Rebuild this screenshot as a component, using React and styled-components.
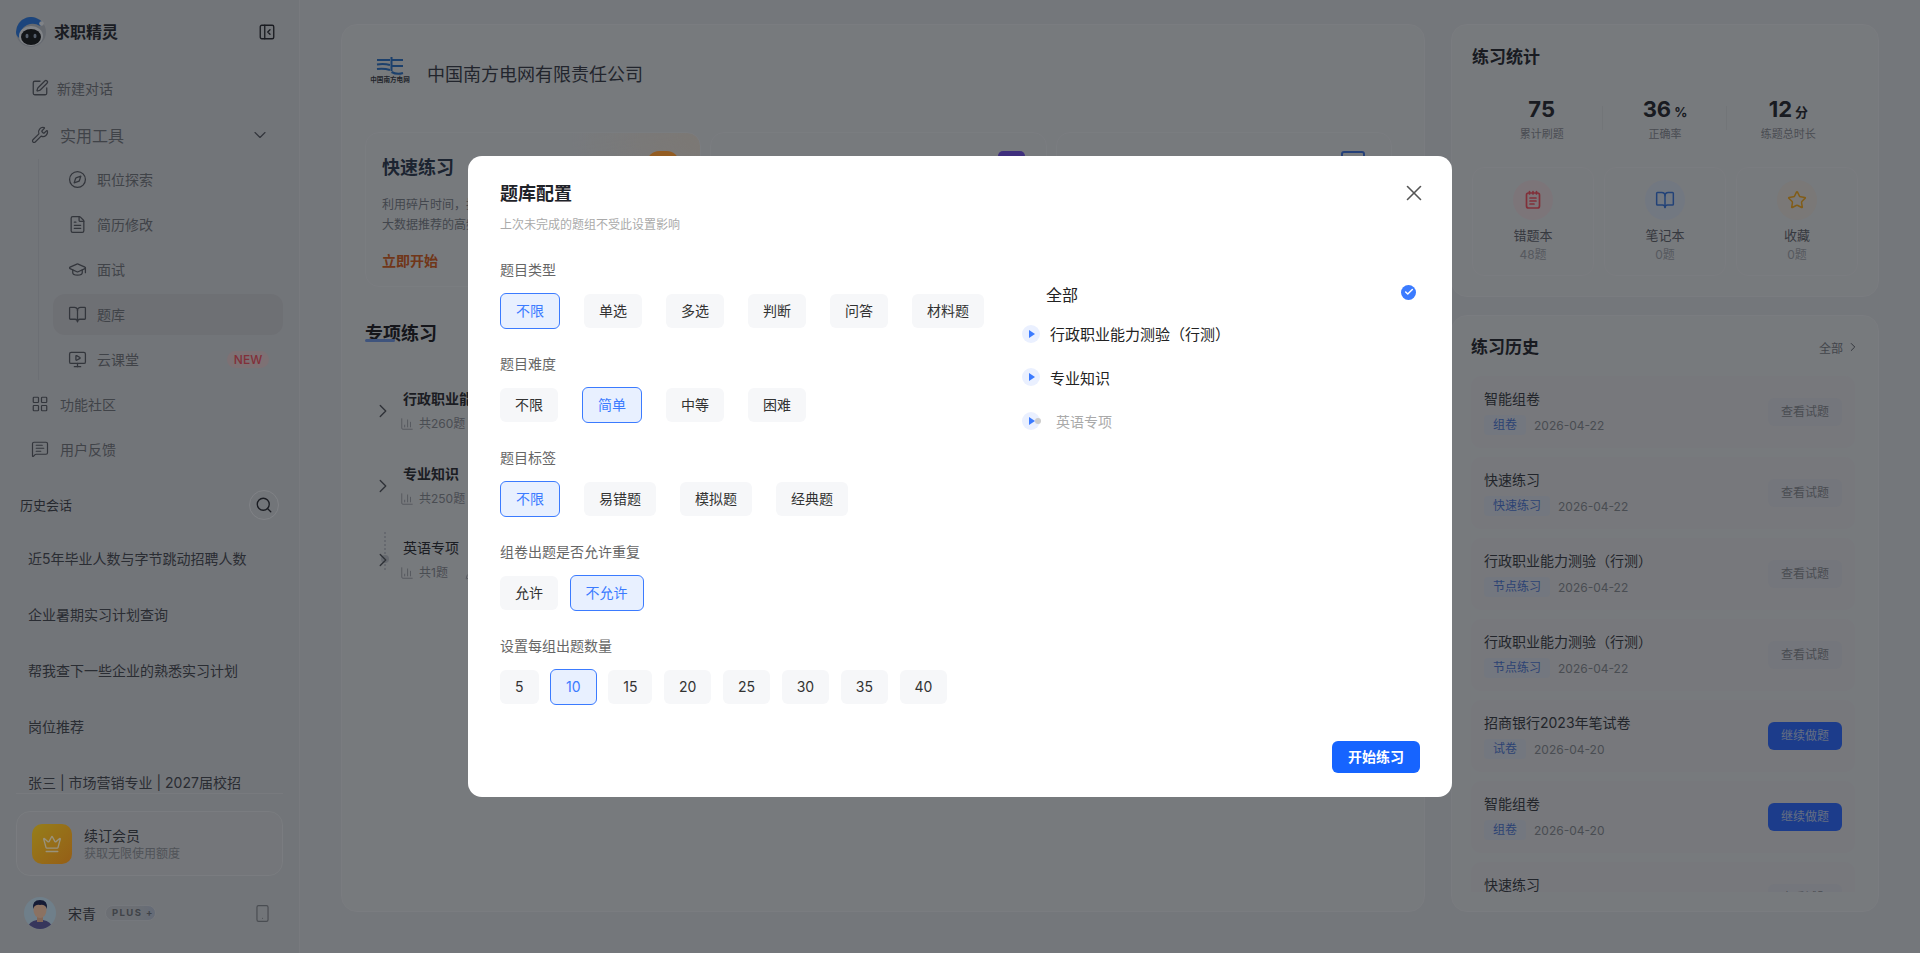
import React from 'react';
import styled, {createGlobalStyle} from 'styled-components';
import {
  BookOpen, ChartColumn, Check, ChevronDown, ChevronRight, Compass, Crown, FileText, GraduationCap,
  LayoutGrid, MessageSquareText, MonitorPlay, PanelLeftClose, PenLine, Search, Smartphone, SquarePen,
  Star, Wrench, X,
} from 'lucide-react';

const GlobalStyle = createGlobalStyle`
  html, body {
    margin: 0;
    height: 100%;
    overflow: hidden;
    font-family: Inter, "Noto Sans CJK SC", sans-serif;
    color: #3a3f4b;
  }
  * { box-sizing: border-box; }
`;

const Page = styled.div`
  display: flex;
  height: 100vh;
  background: #c2c6cd;
`;

/* ---------- sidebar ---------- */
const Sidebar = styled.aside`
  width: 300px;
  flex-shrink: 0;
  display: flex;
  flex-direction: column;
  padding: 17px 16px 24px;
  background: #bfc3ca;
  border-right: 1px solid #c8ccd3;
`;
const Brand = styled.div`
  display: flex;
  align-items: center;
  height: 30px;
  padding-right: 7px;
  color: #2c3039;
`;
const BrandName = styled.div`
  margin: -2px 0 0 8px;
  flex: 1;
  font-size: 16px;
  font-weight: 700;
`;
const NavList = styled.nav`
  margin-top: 20.5px;
  display: flex;
  flex-direction: column;
  gap: 4px;
`;
const NavRow = styled.div`
  height: 41px;
  display: flex;
  align-items: center;
  padding: 0 15px;
  gap: ${p => p.$gap || 13}px;
  margin-top: ${p => p.$mt || 0}px;
  font-size: ${p => p.$fs || 14}px;
  color: #6b7079;
  border-radius: 12px;
  background: ${p => (p.$active ? '#b8bbc2' : 'transparent')};
  svg { flex-shrink: 0; color: #555a64; }
`;
const SubNav = styled.div`
  margin: -1px 0 0 22px;
  padding-left: 14px;
  border-left: 1px solid #b4b9c1;
  display: flex;
  flex-direction: column;
  gap: 4px;
`;
const NewBadge = styled.span`
  margin-left: auto;
  margin-right: -1px;
  width: 42px;
  height: 17px;
  border-radius: 9px;
  background: #d0bcc2;
  color: #d85060;
  font-size: 12px;
  font-weight: 500;
  line-height: 17px;
  text-align: center;
`;
const HistoryHead = styled.div`
  margin-top: 20px;
  height: 30px;
  padding: 0 4px;
  display: flex;
  align-items: center;
  justify-content: space-between;
  font-size: 13px;
  color: #3f434d;
`;
const SearchBtn = styled.div`
  width: 30px;
  height: 30px;
  border-radius: 50%;
  border: 1px solid #d5d9df;
  display: flex;
  align-items: center;
  justify-content: center;
  color: #2c3039;
`;
const HistoryList = styled.div`
  flex: 1;
  min-height: 0;
  margin-top: 10px;
  overflow: hidden;
  border-bottom: 1px solid #c8ccd3;
`;
const HistoryItem = styled.div`
  height: 56.2px;
  padding-left: 12px;
  display: flex;
  align-items: center;
  font-size: 14px;
  color: #474b55;
  white-space: nowrap;
`;
const MemberCard = styled.div`
  margin-top: 17px;
  height: 65px;
  padding: 0 15px;
  display: flex;
  align-items: center;
  gap: 12px;
  background: #c1c5cb;
  border: 1px solid #cbcfd5;
  border-radius: 14px;
`;
const CrownBox = styled.div`
  width: 40px;
  height: 40px;
  border-radius: 10px;
  background: linear-gradient(135deg, #fbd32c, #f99d26);
  color: #fff3cf;
  display: flex;
  align-items: center;
  justify-content: center;
`;
const MemberTitle = styled.div`
  font-size: 14px;
  line-height: 19px;
  color: #3f434d;
`;
const MemberSub = styled.div`
  font-size: 12px;
  line-height: 17px;
  color: #868b94;
`;
const UserRow = styled.div`
  margin-top: 21px;
  height: 32px;
  padding: 0 11px 0 8px;
  display: flex;
  align-items: center;
  font-size: 14px;
  color: #3f434d;
`;
const UserName = styled.span`
  margin-left: 12px;
`;
const PlusBadge = styled.span`
  margin-left: 9px;
  width: 51px;
  height: 16px;
  border-radius: 8px;
  border: 1px solid #c4c9d0;
  background: linear-gradient(90deg, #b4b9c1 60%, #a8b3c7);
  color: #6b7079;
  font-size: 9.5px;
  font-weight: 700;
  letter-spacing: 1.4px;
  line-height: 14px;
  padding-left: 6px;
  white-space: nowrap;
`;
const PhoneIcon = styled.span`
  margin-left: auto;
  display: flex;
  color: #7b8089;
`;

/* ---------- main column ---------- */
const Content = styled.main`
  flex: 1;
  min-width: 0;
  display: flex;
  gap: 26px;
  padding: 24px 41px 41px;
`;
const Card = styled.section`
  background: #c7cbd1;
  border: 1px solid #cbcfd5;
  border-radius: 16px;
`;
const MainCard = styled(Card)`
  flex: 1;
  min-width: 0;
  padding: 30px 32px 0 24px;
`;
const CompanyRow = styled.div`
  height: 36px;
  display: flex;
  align-items: center;
  gap: 17px;
  padding-left: 4px;
  font-size: 18px;
  color: #3a3f4b;
`;
const CompanyLogo = styled.div`
  width: 40px;
  display: flex;
  flex-direction: column;
  align-items: center;
  margin-top: -4px;
  svg { display: block; }
  span {
    font-size: 6.6px;
    line-height: 9px;
    font-weight: 700;
    color: #3a3f4b;
    white-space: nowrap;
  }
`;
const PracticeGrid = styled.div`
  margin: 41px 0 0 -1px;
  display: grid;
  grid-template-columns: repeat(3, 1fr);
  gap: 9px;
`;
const PracticeCard = styled.div`
  position: relative;
  height: 155px;
  padding: 23px 16px;
  border: 1px solid #ccd0d6;
  border-radius: 14px;
  overflow: hidden;
  background: ${p => p.$glow || 'transparent'};
`;
const PracticeTitle = styled.div`
  font-size: 18px;
  line-height: 24px;
  font-weight: 700;
  color: #2f3c52;
`;
const PracticeDesc = styled.div`
  margin-top: 15px;
  font-size: 12px;
  line-height: 20px;
  color: #6f7580;
  white-space: nowrap;
`;
const PracticeLink = styled.div`
  margin-top: 16px;
  font-size: 14px;
  line-height: 20px;
  font-weight: 700;
  color: #bb5a2a;
`;
const CornerIcon = styled.div`
  position: absolute;
  top: 18px;
  right: ${p => p.$right}px;
  width: ${p => p.$size}px;
  height: 32px;
  border-radius: ${p => p.$radius}px;
  background: ${p => p.$bg};
  border: ${p => p.$border || 'none'};
`;
const SectionTitle = styled.h2`
  position: relative;
  width: max-content;
  margin: 35px 0 0 -1px;
  font-size: 18px;
  line-height: 24px;
  font-weight: 700;
  color: #23262d;
  &::after {
    content: '';
    position: absolute;
    left: 0;
    bottom: 4px;
    width: 30px;
    height: 3px;
    border-radius: 2px;
    background: #6a8cd0;
  }
`;
const TreeList = styled.div`
  margin-top: 43px;
  display: flex;
  flex-direction: column;
  gap: 30.5px;
`;
const TreeRow = styled.div`
  position: relative;
  padding-left: 37px;
  height: 44px;
`;
const TreeChevron = styled.span`
  position: absolute;
  left: 6px;
  top: 11px;
  display: flex;
  color: #4f545e;
`;
const TreeConnector = styled.span`
  position: absolute;
  left: 18px;
  top: -6px;
  height: 38px;
  border-left: 2px dotted #aab0b9;
`;
const TreeDot = styled.span`
  position: absolute;
  left: 15px;
  top: 17px;
  width: 8px;
  height: 8px;
  border-radius: 50%;
  background: #aab0b9;
`;
const TreeTitle = styled.div`
  font-size: 14px;
  line-height: 20px;
  font-weight: ${p => (p.$plain ? 400 : 700)};
  color: #2e3139;
  white-space: nowrap;
`;
const TreeMeta = styled.div`
  margin: 6px 0 0 -3px;
  display: flex;
  align-items: center;
  gap: 5px;
  font-size: 12px;
  line-height: 18px;
  color: #7b8089;
  svg { color: #868b94; }
  span + svg { margin-left: 12px; }
`;

/* ---------- right column ---------- */
const SideColumn = styled.div`
  width: 428px;
  flex-shrink: 0;
  display: flex;
  flex-direction: column;
  gap: 18px;
`;
const StatsCard = styled(Card)`
  height: 273px;
  padding: 20px 20px 0;
`;
const HistoryCard = styled(Card)`
  flex: 1;
  min-height: 0;
  padding: 19px 23px 19px 19px;
  display: flex;
  flex-direction: column;
`;
const CardTitle = styled.div`
  font-size: 17px;
  line-height: 24px;
  font-weight: 700;
  color: #2a2e37;
`;
const StatRow = styled.div`
  margin: 25px 8px 0;
  display: grid;
  grid-template-columns: repeat(3, 1fr);
`;
const Stat = styled.div`
  position: relative;
  text-align: center;
  &:not(:last-child)::after {
    content: '';
    position: absolute;
    right: 0;
    top: 12px;
    height: 24px;
    border-right: 1px solid #bfc3c9;
  }
`;
const StatValue = styled.div`
  font-size: 22px;
  line-height: 30px;
  font-weight: 700;
  color: #2a2e37;
  small {
    margin-left: 3px;
    font-size: 13px;
    line-height: 1;
    font-weight: 700;
  }
`;
const StatLabel = styled.div`
  margin-top: 2px;
  font-size: 11px;
  line-height: 16px;
  color: #7b8089;
`;
const TileRow = styled.div`
  margin-top: 25px;
  display: grid;
  grid-template-columns: repeat(3, 1fr);
  gap: 10px;
`;
const Tile = styled.div`
  height: 109px;
  padding-top: 12px;
  display: flex;
  flex-direction: column;
  align-items: center;
  border: 1px solid #cccfd5;
  border-radius: 12px;
`;
const TileIcon = styled.div`
  width: 40px;
  height: 40px;
  border-radius: 50%;
  background: ${p => p.$bg};
  color: ${p => p.$color};
  display: flex;
  align-items: center;
  justify-content: center;
`;
const TileName = styled.div`
  margin-top: 6px;
  font-size: 13px;
  line-height: 18px;
  color: #5b606a;
`;
const TileCount = styled.div`
  margin-top: 2px;
  font-size: 12px;
  line-height: 18px;
  color: #90959e;
`;
const HistoryTop = styled.div`
  display: flex;
  align-items: center;
  justify-content: space-between;
  margin-right: -5px;
`;
const AllLink = styled.div`
  display: flex;
  align-items: center;
  gap: 3px;
  font-size: 12px;
  color: #6f747d;
  svg { color: #4f545e; }
`;
const RecordList = styled.div`
  margin-top: 17px;
  flex: 1;
  min-height: 0;
  overflow: hidden;
  display: flex;
  flex-direction: column;
  gap: 9px;
`;
const Record = styled.div`
  flex-shrink: 0;
  height: 72px;
  padding: 0 13px;
  display: flex;
  align-items: center;
  justify-content: space-between;
  border-radius: 10px;
  background: #c6c9cf;
`;
const RecordTitle = styled.div`
  font-size: 14px;
  line-height: 20px;
  color: #3a3e48;
  white-space: nowrap;
`;
const RecordMeta = styled.div`
  margin-top: 6px;
  display: flex;
  align-items: center;
  gap: 8px;
  font-size: 12px;
  color: #7b8089;
`;
const RecordTag = styled.span`
  height: 20px;
  padding: 0 9px;
  border-radius: 4px;
  background: #c0c6d4;
  color: #4a6fc0;
  line-height: 20px;
`;
const RecordBtn = styled.div`
  width: 74px;
  height: 28px;
  border-radius: 6px;
  font-size: 12px;
  line-height: 28px;
  text-align: center;
  background: ${p => (p.$primary ? '#3064e8' : '#c2c5cf')};
  color: ${p => (p.$primary ? '#a8b8d8' : '#7b8089')};
`;

/* ---------- dialog ---------- */
const Overlay = styled.div`
  position: fixed;
  inset: 0;
  display: flex;
  align-items: center;
  justify-content: center;
  background: rgba(0, 0, 0, 0.4);
`;
const Dialog = styled.div`
  position: relative;
  width: 984px;
  padding: 25px 32px 24px 32px;
  background: #fff;
  border-radius: 14px;
  color: #333;
`;
const CloseBtn = styled.span`
  position: absolute;
  top: 24px;
  right: 25px;
  display: flex;
  color: #555;
`;
const DialogTitle = styled.div`
  font-size: 18px;
  line-height: 26px;
  font-weight: 700;
  color: #1f2329;
`;
const DialogSub = styled.div`
  margin-top: 9px;
  font-size: 12px;
  line-height: 18px;
  color: #aaa;
`;
const DialogBody = styled.div`
  margin-top: 26px;
  display: flex;
`;
const OptionColumn = styled.div`
  width: 522px;
  flex-shrink: 0;
  display: flex;
  flex-direction: column;
  gap: 25px;
`;
const OptionLabel = styled.div`
  font-size: 14px;
  line-height: 20px;
  color: #666;
`;
const ChipRow = styled.div`
  margin-top: 13px;
  height: 36px;
  display: flex;
  align-items: center;
  gap: ${p => p.$gap}px;
`;
const Chip = styled.div`
  padding: 0 15px;
  height: ${p => (p.$active ? 36 : 34)}px;
  line-height: 34px;
  font-size: 14px;
  white-space: nowrap;
  border-radius: 6px;
  background: ${p => (p.$active ? '#e8f0ff' : '#f6f7f9')};
  border: ${p => (p.$active ? '1px solid #3b7bff' : 'none')};
  color: ${p => (p.$active ? '#3b7bff' : '#333')};
`;
const SubjectTree = styled.div`
  flex: 1;
  padding: 14.5px 4px 0 0;
`;
const AllRow = styled.div`
  height: 39px;
  padding-left: 24px;
  display: flex;
  align-items: center;
  justify-content: space-between;
  font-size: 16px;
  color: #222;
`;
const CheckMark = styled.span`
  width: 15px;
  height: 15px;
  margin-bottom: 4px;
  border-radius: 50%;
  background: #3b7bff;
  color: #fff;
  display: flex;
  align-items: center;
  justify-content: center;
`;
const SubjectRow = styled.div`
  height: 40px;
  margin-bottom: 3.6px;
  display: flex;
  align-items: center;
  gap: ${p => (p.$muted ? 16 : 10)}px;
  font-size: ${p => (p.$muted ? 14 : 15)}px;
  color: ${p => (p.$muted ? '#aaa' : '#222')};
`;
const Expander = styled.span`
  position: relative;
  width: 18px;
  height: 18px;
  border-radius: 50%;
  background: #eaf0ff;
  flex-shrink: 0;
  &::before {
    content: '';
    position: absolute;
    left: 6.5px;
    top: 5px;
    border-left: 6px solid #3b7bff;
    border-top: 4px solid transparent;
    border-bottom: 4px solid transparent;
  }
  ${p => p.$dot && `
    &::after {
      content: '';
      position: absolute;
      right: -1px;
      top: 6px;
      width: 6px;
      height: 6px;
      border-radius: 50%;
      background: #ccc;
    }
  `}
`;
const DialogFooter = styled.div`
  margin-top: 36px;
  display: flex;
  justify-content: flex-end;
`;
const StartBtn = styled.div`
  width: 88px;
  height: 32px;
  border-radius: 6px;
  background: #1664ff;
  color: #fff;
  font-size: 14px;
  font-weight: 600;
  line-height: 32px;
  text-align: center;
`;

/* ---------- drawings ---------- */
const RobotLogo = () => (
  <svg width="30" height="30" viewBox="0 0 30 30">
    <circle cx="15" cy="15" r="15" fill="#a9b0ba"/>
    <path d="M0 15A15 15 0 0 1 27 6L24 9Q18 5 11 8Q4 11 3.5 21Q0 19 0 15Z" fill="#2f74d0"/>
    <circle cx="25.5" cy="6.5" r="2.3" fill="#d6dbe2"/>
    <ellipse cx="15" cy="19" rx="12" ry="10" fill="#d6dbe2"/>
    <ellipse cx="15" cy="20" rx="10" ry="8" fill="#1f2329"/>
    <ellipse cx="11" cy="19" rx="1.5" ry="2.2" fill="#8a9bb0"/>
    <ellipse cx="19" cy="19" rx="1.5" ry="2.2" fill="#8a9bb0"/>
  </svg>
);

const GridLogo = () => (
  <svg width="28" height="19" viewBox="0 0 28 19" fill="none" stroke="#2f6cb4" strokeWidth="2">
    <path d="M1 3H14"/>
    <path d="M1 7.5Q8 6.5 14 8"/>
    <path d="M1 12Q8 11 14 13"/>
    <path d="M15.5 0V14"/>
    <path d="M15.5 3H27"/>
    <path d="M15.5 9H27"/>
    <path d="M15.5 15Q21 18 27 16"/>
  </svg>
);

const Avatar = () => (
  <svg width="32" height="32" viewBox="0 0 32 32">
    <clipPath id="avatarClip"><circle cx="16" cy="16" r="16"/></clipPath>
    <g clipPath="url(#avatarClip)">
      <rect width="32" height="32" fill="#b9d4e6"/>
      <path d="M3 32Q5 24 13 23H19Q27 24 29 32Z" fill="#5d5a9a"/>
      <rect x="13" y="18" width="6" height="7" fill="#d8ab92"/>
      <ellipse cx="16" cy="13" rx="6.5" ry="8" fill="#e8bea4"/>
      <path d="M9 12Q8 3 16 3Q24 3 23 12Q21 7 16 8Q11 7 9 12Z" fill="#24305a"/>
    </g>
  </svg>
);

const NoteIcon = () => (
  <svg width="20" height="20" viewBox="0 0 20 20" fill="none" stroke="currentColor" strokeWidth="1.7" strokeLinecap="round">
    <rect x="3.5" y="3" width="13" height="15" rx="2"/>
    <path d="M6.5 1.5V4M10 1.5V4M13.5 1.5V4M7 8H13M7 11H13M7 14H11"/>
  </svg>
);

/* ---------- data ---------- */
const tools = [
  {icon: Compass, label: '职位探索'},
  {icon: FileText, label: '简历修改'},
  {icon: GraduationCap, label: '面试'},
  {icon: BookOpen, label: '题库', active: true},
  {icon: MonitorPlay, label: '云课堂', badge: true},
];
const chats = [
  '近5年毕业人数与字节跳动招聘人数',
  '企业暑期实习计划查询',
  '帮我查下一些企业的熟悉实习计划',
  '岗位推荐',
  '张三 | 市场营销专业 | 2027届校招',
];
const records = [
  {title: '智能组卷', tag: '组卷', date: '2026-04-22'},
  {title: '快速练习', tag: '快速练习', date: '2026-04-22'},
  {title: '行政职业能力测验（行测）', tag: '节点练习', date: '2026-04-22'},
  {title: '行政职业能力测验（行测）', tag: '节点练习', date: '2026-04-22'},
  {title: '招商银行2023年笔试卷', tag: '试卷', date: '2026-04-20', resume: true},
  {title: '智能组卷', tag: '组卷', date: '2026-04-20', resume: true},
  {title: '快速练习', tag: '快速练习', date: '2026-04-20'},
];
const optionGroups = [
  {label: '题目类型', gap: 24, chips: ['不限', '单选', '多选', '判断', '问答', '材料题'], active: '不限'},
  {label: '题目难度', gap: 24, chips: ['不限', '简单', '中等', '困难'], active: '简单'},
  {label: '题目标签', gap: 24, chips: ['不限', '易错题', '模拟题', '经典题'], active: '不限'},
  {label: '组卷出题是否允许重复', gap: 11.6, chips: ['允许', '不允许'], active: '不允许'},
  {label: '设置每组出题数量', gap: 11.6, chips: ['5', '10', '15', '20', '25', '30', '35', '40'], active: '10'},
];

const App = () => {
  return (
    <Page>
      <GlobalStyle/>
      <Sidebar>
        <Brand>
          <RobotLogo/>
          <BrandName>求职精灵</BrandName>
          <PanelLeftClose size={18} strokeWidth={1.8}/>
        </Brand>
        <NavList>
          <NavRow $gap={8}><SquarePen size={18} strokeWidth={1.7}/>新建对话</NavRow>
          <NavRow $mt={2} $fs={16} $gap={11}>
            <Wrench size={18} strokeWidth={1.6}/>实用工具
            <ChevronDown size={20} strokeWidth={1.4} style={{marginLeft: 'auto', marginRight: -2}}/>
          </NavRow>
          <SubNav>
            {tools.map(({icon: Icon, label, active, badge}) => (
              <NavRow key={label} $active={active} $gap={10}>
                <Icon size={19} strokeWidth={1.6}/>{label}
                {badge && <NewBadge>NEW</NewBadge>}
              </NavRow>
            ))}
          </SubNav>
          <NavRow $gap={11}><LayoutGrid size={18} strokeWidth={1.6}/>功能社区</NavRow>
          <NavRow $gap={11}><MessageSquareText size={18} strokeWidth={1.6}/>用户反馈</NavRow>
        </NavList>
        <HistoryHead>
          历史会话
          <SearchBtn><Search size={18} strokeWidth={1.8}/></SearchBtn>
        </HistoryHead>
        <HistoryList>
          {chats.map(c => <HistoryItem key={c}>{c}</HistoryItem>)}
        </HistoryList>
        <MemberCard>
          <CrownBox><Crown size={20} strokeWidth={1.6}/></CrownBox>
          <div>
            <MemberTitle>续订会员</MemberTitle>
            <MemberSub>获取无限使用额度</MemberSub>
          </div>
        </MemberCard>
        <UserRow>
          <Avatar/>
          <UserName>宋青</UserName>
          <PlusBadge>PLUS +</PlusBadge>
          <PhoneIcon><Smartphone size={19} strokeWidth={1.5}/></PhoneIcon>
        </UserRow>
      </Sidebar>

      <Content>
        <MainCard>
          <CompanyRow>
            <CompanyLogo>
              <GridLogo/>
              <span>中国南方电网</span>
            </CompanyLogo>
            中国南方电网有限责任公司
          </CompanyRow>
          <PracticeGrid>
            <PracticeCard $glow="radial-gradient(circle at 100% 0, #cfc9c2, transparent 35%)">
              <PracticeTitle>快速练习</PracticeTitle>
              <PracticeDesc>利用碎片时间，按模块快速刷题<br/>大数据推荐的高频考点</PracticeDesc>
              <PracticeLink>立即开始</PracticeLink>
              <CornerIcon $right={21} $size={32} $radius={12} $bg="#f59a3a"/>
            </PracticeCard>
            <PracticeCard>
              <CornerIcon $right={21} $size={27} $radius={5} $bg="#6a4fd0"/>
            </PracticeCard>
            <PracticeCard>
              <CornerIcon $right={26} $size={24} $radius={3} $bg="transparent" $border="2px solid #3f6cc8"/>
            </PracticeCard>
          </PracticeGrid>
          <SectionTitle>专项练习</SectionTitle>
          <TreeList>
            <TreeRow>
              <TreeChevron><ChevronRight size={22} strokeWidth={1.5}/></TreeChevron>
              <TreeTitle>行政职业能力测验（行测）</TreeTitle>
              <TreeMeta><ChartColumn size={14} strokeWidth={1.4}/><span>共260题</span></TreeMeta>
            </TreeRow>
            <TreeRow>
              <TreeChevron><ChevronRight size={22} strokeWidth={1.5}/></TreeChevron>
              <TreeTitle>专业知识</TreeTitle>
              <TreeMeta><ChartColumn size={14} strokeWidth={1.4}/><span>共250题</span></TreeMeta>
            </TreeRow>
            <TreeRow>
              <TreeConnector/>
              <TreeDot/>
              <TreeChevron><ChevronRight size={22} strokeWidth={1.5}/></TreeChevron>
              <TreeTitle $plain>英语专项</TreeTitle>
              <TreeMeta>
                <ChartColumn size={14} strokeWidth={1.4}/><span>共1题</span>
                <PenLine size={14} strokeWidth={1.4}/><span>已做0题</span>
              </TreeMeta>
            </TreeRow>
          </TreeList>
        </MainCard>

        <SideColumn>
          <StatsCard>
            <CardTitle>练习统计</CardTitle>
            <StatRow>
              <Stat><StatValue>75</StatValue><StatLabel>累计刷题</StatLabel></Stat>
              <Stat><StatValue>36<small>%</small></StatValue><StatLabel>正确率</StatLabel></Stat>
              <Stat><StatValue>12<small>分</small></StatValue><StatLabel>练题总时长</StatLabel></Stat>
            </StatRow>
            <TileRow>
              <Tile>
                <TileIcon $bg="#cfc4ca" $color="#d85060"><NoteIcon/></TileIcon>
                <TileName>错题本</TileName>
                <TileCount>48题</TileCount>
              </Tile>
              <Tile>
                <TileIcon $bg="#bfc8d8" $color="#3a6fc8"><BookOpen size={20} strokeWidth={1.8}/></TileIcon>
                <TileName>笔记本</TileName>
                <TileCount>0题</TileCount>
              </Tile>
              <Tile>
                <TileIcon $bg="#cbc9c6" $color="#d89a28"><Star size={20} strokeWidth={1.8}/></TileIcon>
                <TileName>收藏</TileName>
                <TileCount>0题</TileCount>
              </Tile>
            </TileRow>
          </StatsCard>

          <HistoryCard>
            <HistoryTop>
              <CardTitle>练习历史</CardTitle>
              <AllLink>全部<ChevronRight size={14} strokeWidth={1.6}/></AllLink>
            </HistoryTop>
            <RecordList>
              {records.map((r, i) => (
                <Record key={i}>
                  <div>
                    <RecordTitle>{r.title}</RecordTitle>
                    <RecordMeta>
                      <RecordTag>{r.tag}</RecordTag>
                      {r.date}
                    </RecordMeta>
                  </div>
                  <RecordBtn $primary={r.resume}>{r.resume ? '继续做题' : '查看试题'}</RecordBtn>
                </Record>
              ))}
            </RecordList>
          </HistoryCard>
        </SideColumn>
      </Content>

      <Overlay>
        <Dialog>
          <CloseBtn><X size={26} strokeWidth={1.5}/></CloseBtn>
          <DialogTitle>题库配置</DialogTitle>
          <DialogSub>上次未完成的题组不受此设置影响</DialogSub>
          <DialogBody>
            <OptionColumn>
              {optionGroups.map(group => (
                <div key={group.label}>
                  <OptionLabel>{group.label}</OptionLabel>
                  <ChipRow $gap={group.gap}>
                    {group.chips.map(chip => (
                      <Chip key={chip} $active={chip === group.active}>{chip}</Chip>
                    ))}
                  </ChipRow>
                </div>
              ))}
            </OptionColumn>
            <SubjectTree>
              <AllRow>
                全部
                <CheckMark><Check size={10} strokeWidth={3.5}/></CheckMark>
              </AllRow>
              <SubjectRow><Expander/>行政职业能力测验（行测）</SubjectRow>
              <SubjectRow><Expander/>专业知识</SubjectRow>
              <SubjectRow $muted><Expander $dot/>英语专项</SubjectRow>
            </SubjectTree>
          </DialogBody>
          <DialogFooter>
            <StartBtn>开始练习</StartBtn>
          </DialogFooter>
        </Dialog>
      </Overlay>
    </Page>
  );
};

export default App;
